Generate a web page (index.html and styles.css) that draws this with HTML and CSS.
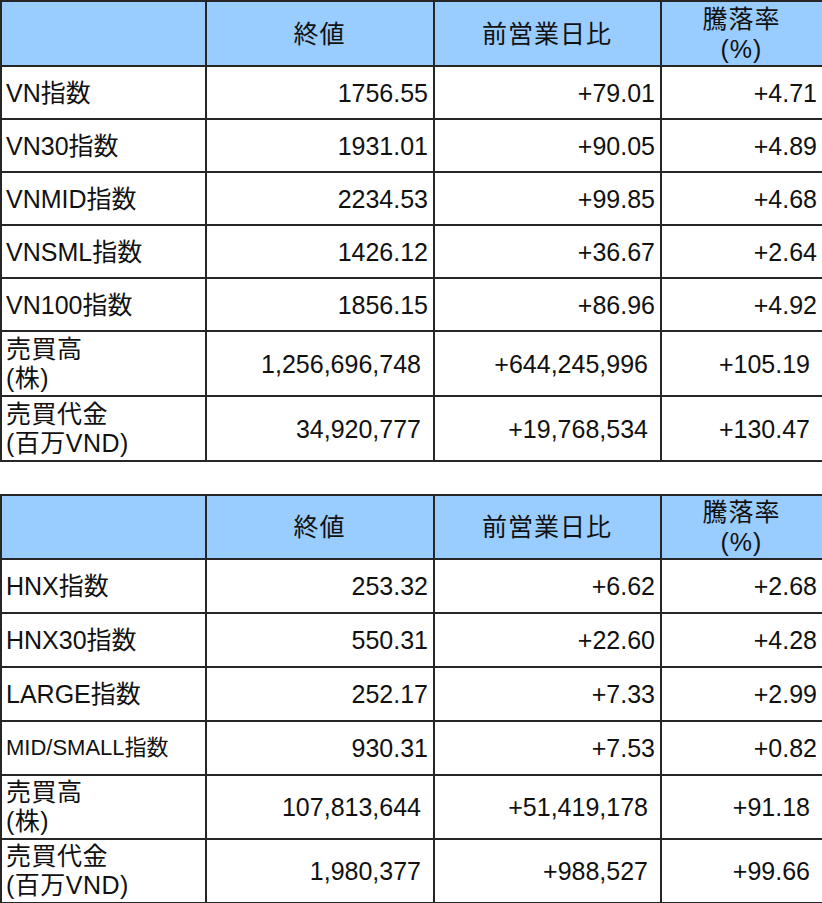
FILE: index.html
```html
<!DOCTYPE html>
<html lang="ja">
<head>
<meta charset="utf-8">
<title>指数</title>
<link rel="stylesheet" href="styles.css">
</head>
<body>
<div class="page">
  <table class="mkt">
    <colgroup><col class="c1"><col class="c2"><col class="c3"><col class="c4"></colgroup>
    <thead>
      <tr class="head"><th></th><th>終値</th><th>前営業日比</th><th class="two">騰落率<br>(%)</th></tr>
    </thead>
    <tbody>
      <tr class="idx"><td class="lbl">VN指数</td><td>1756.55</td><td>+79.01</td><td>+4.71</td></tr>
      <tr class="idx"><td class="lbl">VN30指数</td><td>1931.01</td><td>+90.05</td><td>+4.89</td></tr>
      <tr class="idx"><td class="lbl">VNMID指数</td><td>2234.53</td><td>+99.85</td><td>+4.68</td></tr>
      <tr class="idx"><td class="lbl">VNSML指数</td><td>1426.12</td><td>+36.67</td><td>+2.64</td></tr>
      <tr class="idx"><td class="lbl">VN100指数</td><td>1856.15</td><td>+86.96</td><td>+4.92</td></tr>
      <tr class="vol"><td class="lbl">売買高<br>(株)</td><td>1,256,696,748</td><td>+644,245,996</td><td>+105.19</td></tr>
      <tr class="vol"><td class="lbl">売買代金<br>(百万VND)</td><td>34,920,777</td><td>+19,768,534</td><td>+130.47</td></tr>
    </tbody>
  </table>

  <table class="mkt second">
    <colgroup><col class="c1"><col class="c2"><col class="c3"><col class="c4"></colgroup>
    <thead>
      <tr class="head"><th></th><th>終値</th><th>前営業日比</th><th class="two">騰落率<br>(%)</th></tr>
    </thead>
    <tbody>
      <tr class="idx"><td class="lbl">HNX指数</td><td>253.32</td><td>+6.62</td><td>+2.68</td></tr>
      <tr class="idx"><td class="lbl">HNX30指数</td><td>550.31</td><td>+22.60</td><td>+4.28</td></tr>
      <tr class="idx"><td class="lbl">LARGE指数</td><td>252.17</td><td>+7.33</td><td>+2.99</td></tr>
      <tr class="idx"><td class="lbl small">MID/SMALL指数</td><td>930.31</td><td>+7.53</td><td>+0.82</td></tr>
      <tr class="vol"><td class="lbl">売買高<br>(株)</td><td>107,813,644</td><td>+51,419,178</td><td>+91.18</td></tr>
      <tr class="vol"><td class="lbl">売買代金<br>(百万VND)</td><td>1,980,377</td><td>+988,527</td><td>+99.66</td></tr>
    </tbody>
  </table>
</div>
</body>
</html>
```

FILE: styles.css
```css
html, body {
  margin: 0;
  padding: 0;
  background: #ffffff;
}

.page {
  display: flex;
  flex-direction: column;
  gap: 32px;
  width: 822px;
}

.mkt {
  width: 822px;
  table-layout: fixed;
  border-collapse: collapse;
  font-family: "Liberation Sans", "Noto Sans CJK JP", sans-serif;
  font-size: 25px;
  color: #111;
}

.c1 { width: 205px; }
.c2 { width: 228px; }
.c3 { width: 227px; }
.c4 { width: 162px; }

.mkt th,
.mkt td {
  border: 2px solid #262626;
  padding: 0 5px 0 4px;
  line-height: 30px;
  white-space: nowrap;
}

.mkt th {
  background: #99ccff;
  font-weight: normal;
  text-align: center;
  letter-spacing: 1px;
}

.head {
  height: 65px;
}

.second .head {
  height: 64px;
}

.idx {
  height: 53px;
}

.second .idx {
  height: 54px;
}

.vol {
  height: 65px;
}

.second .vol {
  height: 64px;
}

.mkt td {
  text-align: right;
}

.mkt td.lbl {
  text-align: left;
  padding-left: 4px;
}

.vol td {
  padding-right: 12px;
}

.vol td.lbl {
  line-height: 29px;
  vertical-align: middle;
  letter-spacing: 0.5px;
}

.lbl.small {
  font-size: 22px;
}
```
